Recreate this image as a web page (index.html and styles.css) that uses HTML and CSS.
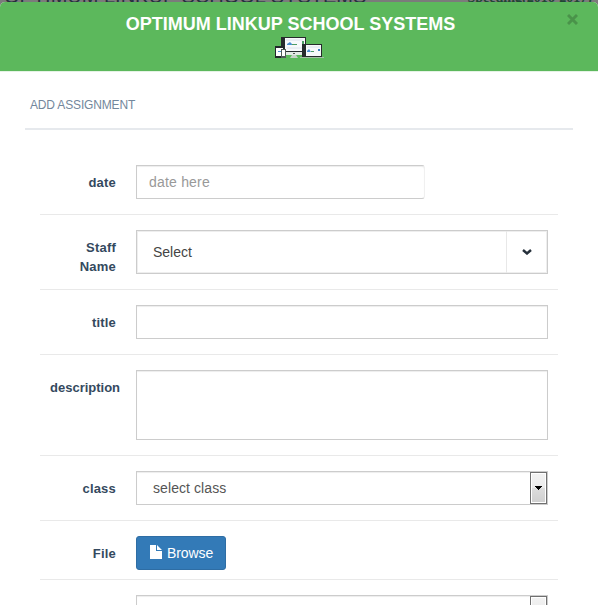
FILE: index.html
```
<!DOCTYPE html>
<html lang="en">
<head>
<meta charset="utf-8">
<title>Add Assignment</title>
<link rel="stylesheet" href="styles.css">
</head>
<body>
<div class="backdrop"><span class="site">OPTIMUM LINKUP SCHOOL SYSTEMS</span><span class="session">Speeding(2016-2017)</span></div>
<main class="modal">
  <header class="modal-header">
    <h1>OPTIMUM LINKUP SCHOOL SYSTEMS</h1>
    <svg class="devices" viewBox="0 0 50 24" width="50" height="24">
      <path d="M6 1h25v18H6z" fill="#252b2c"/><path d="M10 2h20v13H10z" fill="#f7f9fb"/>
      <path d="M6 16h25v3H6z" fill="#e4ebe6"/><path d="M18 17h2v1h-2z" fill="#555"/><path d="M17 19h4l2 3h-8z" fill="#c5d2c6"/>
      <path d="M12 8l3-2 2 2v1h-5z" fill="#4b8fd0"/><path d="M17 8h5v1h-5z" fill="#4d9c66"/><path d="M27 5h2v3h-2z" fill="#4d9c66"/><path d="M11 4h17M12 12h16" stroke="#dce2ed"/>
      <path d="M0 10h9v12H0z" fill="#20282a"/><path d="M1 12h7v8H1z" fill="#fff"/><path d="M3 15h3v1H3z" fill="#4b8fd0"/>
      <path d="M6 13h5v9H6z" fill="#4f5b57"/><path d="M7 14h3v6H7z" fill="#fff"/>
      <path d="M27 8h20v13H27z" fill="#252b2c"/><path d="M31 9h15v11H31z" fill="#f7f9fb"/>
      <path d="M32 15l2-2 2 3h-4z" fill="#4b8fd0"/><path d="M36 15h3v1h-3z" fill="#4d9c66"/><path d="M43 13h2v2h-2z" fill="#397fc0"/><path d="M32 11h13" stroke="#dce2ed"/>
      <path d="M25 21h24v1H25z" fill="#a6bda8"/>
    </svg>
    <button class="close" aria-label="Close"><svg viewBox="0 0 11 11" width="11" height="11"><path d="M1 1l9 9M10 1l-9 9"/></svg></button>
  </header>
  <section class="panel">
    <h2>ADD ASSIGNMENT</h2>
    <form>
      <div class="row"><label>date</label><input class="control date" placeholder="date here"></div>
      <div class="row staff"><label>Staff Name</label><div class="control combo"><span>Select</span><i><svg viewBox="0 0 10 6" width="10" height="6"><path d="M1 1l4 3.500 4-3.500"/></svg></i></div></div>
      <div class="row"><label>title</label><input class="control"></div>
      <div class="row"><label class="wide">description</label><textarea class="control area"></textarea></div>
      <div class="row"><label>class</label><div class="control select"><span>select class</span><i><svg viewBox="0 0 7 4" width="7" height="4"><path d="M0 0h7v1H6v1H5v1H4v1H3V3H2V2H1V1H0z"/></svg></i></div></div>
      <div class="row file"><label>File</label><button type="button" class="browse"><svg viewBox="0 0 12 14" width="12" height="14"><path d="M0 0h6v6h6v8H0zM7 0l5 5H7z"/></svg>Browse</button></div>
      <div class="row"><label></label><div class="control select"><i></i></div></div>
    </form>
  </section>
</main>
</body>
</html>
```
FILE: styles.css
```
* { box-sizing: border-box; }
html, body { height: 100%; }
body { margin: 0; overflow: hidden; background: #7b7b7b; font: 14px/20px "Liberation Sans", Arial, sans-serif; color: #555; }
.backdrop { height: 2px; overflow: hidden; display: flex; justify-content: space-between; padding: 0 6px 0 4px; color: #252f3d; font-size: 20px; line-height: 2px; }
.backdrop span { margin-top: -5px; white-space: nowrap; }
.backdrop .session { font: bold 14px/2px "Liberation Serif", serif; margin-top: -3px; color: #204534; }
.modal { background: #fff; height: 603px; border-radius: 5px 5px 0 0; overflow: hidden; }
.modal-header { position: relative; display: flow-root; height: 70px; background: #5cb85c; border-bottom: 1px solid #e5f3e5; }
h1 { margin: 12px 0 0; padding-right: 17px; text-align: center; color: #fff; font-size: 18px; line-height: 20px; }
.devices { display: block; margin: 2px 0 0 275px; }
.close { position: absolute; top: 12px; right: 20px; padding: 0; border: 0; background: none; width: 11px; height: 11px; }
.close svg { display: block; fill: none; stroke: #4a934a; stroke-width: 2.900; }
.panel { padding: 23px 25px 0; }
h2 { margin: 0; height: 35px; padding-left: 5px; border-bottom: 2px solid #e6e9ed; font-size: 12px; line-height: 20px; font-weight: normal; letter-spacing: -.16px; color: #73879c; }
form { margin: 20px 15px 0; }
.row { display: flex; align-items: flex-start; padding: 15px 10px; border-bottom: 1px solid #e9e9e9; }
.row.staff { height: 75px; }
.row.file { padding-bottom: 9px; }
label { width: 66px; margin-right: 20px; padding-top: 8px; text-align: right; font-weight: bold; font-size: 13px; line-height: 19px; letter-spacing: .2px; color: #34495e; }
label.wide { width: 70px; margin-right: 16px; letter-spacing: 0; }
.control { flex: none; display: flex; width: 412px; height: 34px; margin: 0; padding: 6px 12px; border: 1px solid #ccc; border-radius: 0; background: #fff; box-shadow: inset 0 1px 1px rgba(0,0,0,.075); font: inherit; color: #555; outline: 0; resize: none; }
.date { width: 289px; border-right-color: #f0f0f0; border-radius: 0 3px 3px 0; letter-spacing: .2px; }
.date::placeholder { color: #999; opacity: 1; }
.area { height: 70px; }
.combo { height: 44px; padding: 0; box-shadow: inset 0 0 0 1px #eee; line-height: 42px; color: #444; }
.combo span, .select span { flex: 1; padding-left: 16px; }
.combo i { width: 41px; border-left: 1px solid #e8e8e8; display: grid; place-items: center; }
.combo i svg { fill: none; stroke: #26303b; stroke-width: 2.400; }
.select { padding: 0; line-height: 32px; justify-content: flex-end; letter-spacing: .08px; }
.select i { width: 17px; height: 32px; border: 1px solid #707070; box-shadow: inset 0 0 0 1px #fff; background: linear-gradient(#f2f2f2, #ebebeb 50%, #ddd 50%, #cfcfcf); display: grid; place-items: center; }
.browse { display: flex; align-items: center; gap: 5px; width: 90px; height: 34px; padding: 0 12px 0 13px; border: 1px solid #2e6da4; border-radius: 3px; background: #337ab7; color: #fff; font: inherit; letter-spacing: -.1px; justify-content: flex-start; }
.browse svg { flex: none; fill: #fff; margin-top: -2px; }
```
